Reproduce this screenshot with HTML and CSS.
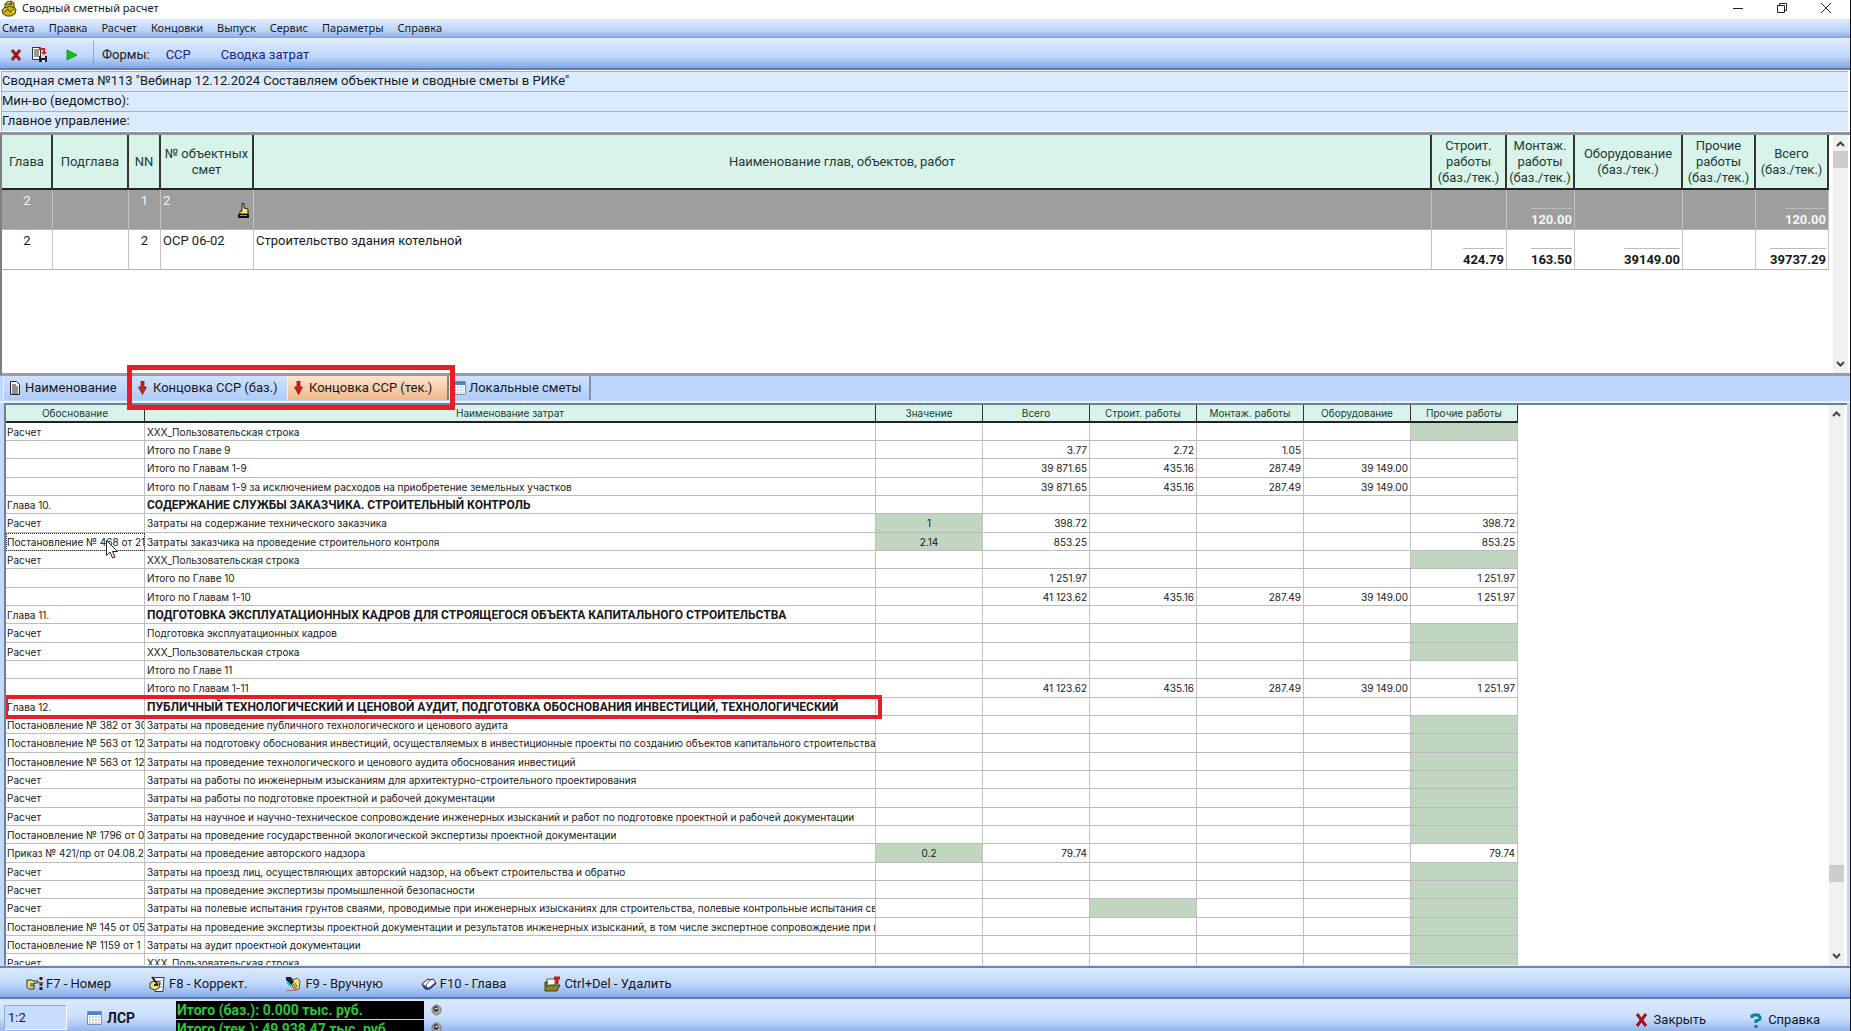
FILE: index.html
```html
<!DOCTYPE html>
<html lang="ru">
<head>
<meta charset="utf-8">
<title>Сводный сметный расчет</title>
<link rel="stylesheet" href="styles.css">
</head>
<body>
<header class="titlebar">
  <svg class="app-icon" width="17" height="17" viewBox="0 0 17 17"><path d="M4 4Q5 1 10 1l3 2v4l2 2-1 5-4 2H6l-4-2-1-4 3-3z" fill="#c9b117" stroke="#4a4107"/><path d="M5 4h6M4 8l5-2 4 2M3 12l4-3 2 3 4-3M10 2v3" stroke="#4a4107" fill="none"/><path d="M6 3l3-1M5 9l-2 1M11 11l2 1" stroke="#fff27a"/></svg>
  <h1>Сводный сметный расчет</h1>
  <div class="window-buttons">
    <button aria-label="Свернуть"><svg width="12" height="12"><path d="M1 6.5h10" stroke="#222"/></svg></button>
    <button aria-label="Развернуть"><svg width="12" height="12"><path d="M1.500 3.500h7v7h-7zM3.500 3V1.500h7v7H9" fill="none" stroke="#222"/></svg></button>
    <button aria-label="Закрыть окно"><svg width="12" height="12"><path d="M1 1l10 10M11 1L1 11" stroke="#222"/></svg></button>
  </div>
</header>
<nav class="menu">
  <button>Смета</button><button>Правка</button><button>Расчет</button><button>Концовки</button><button>Выпуск</button><button>Сервис</button><button>Параметры</button><button>Справка</button>
</nav>
<div class="toolbar">
  <div class="tools">
    <button aria-label="Удалить"><svg width="12" height="12"><path d="M2 1l8 10M10 1L2 11" stroke="#a01414" stroke-width="3"/></svg></button>
    <button aria-label="Сохранить"><svg width="17" height="17"><path d="M1.500 1.500h8v12h-8z" fill="#fff" stroke="#333"/><path d="M3 4h5M3 6h5M3 8h5M3 10h5" stroke="#333"/><path d="M8 3h5v4" fill="none" stroke="#e02020" stroke-width="2"/><path d="M10 6h6l-3 3z" fill="#e02020"/><path d="M8 10h8v6H8z" fill="#16202e"/><path d="M10 10h4v2h-4zM11 14h3v2h-3z" fill="#dde"/></svg></button>
    <button aria-label="Запустить"><svg width="12" height="12"><path d="M1 1l10 5-10 5z" fill="#11c01d" stroke="#0d9a17"/></svg></button>
  </div>
  <span class="forms">Формы:</span>
  <button class="form">ССР</button>
  <button class="form">Сводка затрат</button>
</div>
<section class="info">
  <p>Сводная смета №113 "Вебинар 12.12.2024 Составляем объектные и сводные сметы в РИКе"</p>
  <p>Мин-во (ведомство):</p>
  <p>Главное управление:</p>
</section>
<section class="objects">
  <div class="objects-body">
  <table>
    <colgroup><col class="w-chapter"><col class="w-sub"><col class="w-nn"><col class="w-object"><col><col class="w-build"><col class="w-mount"><col class="w-equip"><col class="w-other"><col class="w-total"></colgroup>
    <thead><tr><th>Глава<th>Подглава<th>NN<th>№ объектных смет<th>Наименование глав, объектов, работ<th>Строит. работы (баз./тек.)<th>Монтаж. работы (баз./тек.)<th>Оборудование (баз./тек.)<th>Прочие работы (баз./тек.)<th>Всего (баз./тек.)</tr></thead>
    <tbody>
      <tr class="selected"><td class="mid">2<td><td class="mid">1<td><div class="object-cell">2<svg width="11" height="17" viewBox="0 0 11 17"><path d="M4 9V1.500h2V6l4 1v5H2V9z" fill="#f6ea6a" stroke="#222"/><path d="M0 12h11v4H0z" fill="#111"/><path d="M2 13.500h7" stroke="#2c8"/></svg></div><td><td><td class="sum"><b>120.00</b><td><td><td class="sum"><b>120.00</b></tr>
      <tr><td class="mid">2<td><td class="mid">2<td>ОСР 06-02<td>Строительство здания котельной<td class="sum"><b>424.79</b><td class="sum"><b>163.50</b><td class="sum"><b>39149.00</b><td><td class="sum"><b>39737.29</b></tr>
    </tbody>
  </table>
  </div>
  <div class="scroll">
    <svg width="9" height="6"><path d="M1 5l3.500-3.500L8 5" fill="none" stroke="#444" stroke-width="2"/></svg>
    <i class="thumb"></i><i class="rest"></i>
    <svg width="9" height="6"><path d="M1 1l3.500 3.500L8 1" fill="none" stroke="#444" stroke-width="2"/></svg>
  </div>
</section>
<div class="tabs" role="tablist">
  <button role="tab" class="tab name"><svg width="10" height="14"><path d="M.5.5h6l3 3v10h-9z" fill="#fff" stroke="#222"/><path d="M2 4h4M2 6h6M2 8h6M2 10h6M2 12h6" stroke="#222"/></svg>Наименование</button>
  <button role="tab" class="tab base"><svg width="9" height="14"><path d="M3 0h3v6h2.500L4.500 13.500.5 6H3z" fill="#e01c10" stroke="#6b1408" stroke-width=".7"/></svg>Концовка ССР (баз.)</button>
  <button role="tab" class="tab current" aria-selected="true"><svg width="9" height="14"><path d="M3 0h3v6h2.500L4.500 13.500.5 6H3z" fill="#e01c10" stroke="#6b1408" stroke-width=".7"/></svg>Концовка ССР (тек.)</button>
  <button role="tab" class="tab local"><svg width="14" height="14"><path d="M.5.500h13v13H.5z" fill="#fff" stroke="#7a8fb0"/><path d="M1 1h12v3H1z" fill="#4d84c8"/><path d="M2 6h10M2 9h10M2 12h10" stroke="#9ab" stroke-dasharray="2 1"/></svg>Локальные сметы</button>
  <span class="highlight"></span>
</div>
<section class="costs">
  <div class="costs-body">
  <table>
    <colgroup><col class="w-basis"><col class="w-cost"><col span="6" class="w-value"></colgroup>
    <thead><tr><th>Обоснование<th>Наименование затрат<th>Значение<th>Всего<th>Строит. работы<th>Монтаж. работы<th>Оборудование<th>Прочие работы</tr></thead>
    <tbody>
      <tr><td>Расчет<td>XXX_Пользовательская строка<td><td><td><td><td><td class="edit"></tr>
      <tr><td><td>Итого по Главе 9<td><td>3.77<td>2.72<td>1.05<td><td></tr>
      <tr><td><td>Итого по Главам 1-9<td><td>39 871.65<td>435.16<td>287.49<td>39 149.00<td></tr>
      <tr><td><td>Итого по Главам 1-9 за исключением расходов на приобретение земельных участков<td><td>39 871.65<td>435.16<td>287.49<td>39 149.00<td></tr>
      <tr><td>Глава 10.<td><b>СОДЕРЖАНИЕ СЛУЖБЫ ЗАКАЗЧИКА. СТРОИТЕЛЬНЫЙ КОНТРОЛЬ</b><td><td><td><td><td><td></tr>
      <tr><td>Расчет<td>Затраты на содержание технического заказчика<td class="edit">1<td>398.72<td><td><td><td>398.72</tr>
      <tr><td class="focus">Постановление № 468 от 21<svg class="cursor" width="12" height="19"><path d="M.5.5v15l3.500-3.500 2.500 6 2.500-1-2.500-5.500h5z" fill="#fff" stroke="#222"/></svg><td>Затраты заказчика на проведение строительного контроля<td class="edit">2.14<td>853.25<td><td><td><td>853.25</tr>
      <tr><td>Расчет<td>XXX_Пользовательская строка<td><td><td><td><td><td class="edit"></tr>
      <tr><td><td>Итого по Главе 10<td><td>1 251.97<td><td><td><td>1 251.97</tr>
      <tr><td><td>Итого по Главам 1-10<td><td>41 123.62<td>435.16<td>287.49<td>39 149.00<td>1 251.97</tr>
      <tr><td>Глава 11.<td><b>ПОДГОТОВКА ЭКСПЛУАТАЦИОННЫХ КАДРОВ ДЛЯ СТРОЯЩЕГОСЯ ОБЪЕКТА КАПИТАЛЬНОГО СТРОИТЕЛЬСТВА</b><td><td><td><td><td><td></tr>
      <tr><td>Расчет<td>Подготовка эксплуатационных кадров<td><td><td><td><td><td class="edit"></tr>
      <tr><td>Расчет<td>XXX_Пользовательская строка<td><td><td><td><td><td class="edit"></tr>
      <tr><td><td>Итого по Главе 11<td><td><td><td><td><td></tr>
      <tr><td><td>Итого по Главам 1-11<td><td>41 123.62<td>435.16<td>287.49<td>39 149.00<td>1 251.97</tr>
      <tr><td class="marked">Глава 12.<span class="row-highlight"></span><td><b>ПУБЛИЧНЫЙ ТЕХНОЛОГИЧЕСКИЙ И ЦЕНОВОЙ АУДИТ, ПОДГОТОВКА ОБОСНОВАНИЯ ИНВЕСТИЦИЙ, ТЕХНОЛОГИЧЕСКИЙ</b><td><td><td><td><td><td></tr>
      <tr><td>Постановление № 382 от 30<td>Затраты на проведение публичного технологического и ценового аудита<td><td><td><td><td><td class="edit"></tr>
      <tr><td>Постановление № 563 от 12<td>Затраты на подготовку обоснования инвестиций, осуществляемых в инвестиционные проекты по созданию объектов капитального строительства<td><td><td><td><td><td class="edit"></tr>
      <tr><td>Постановление № 563 от 12<td>Затраты на проведение технологического и ценового аудита обоснования инвестиций<td><td><td><td><td><td class="edit"></tr>
      <tr><td>Расчет<td>Затраты на работы по инженерным изысканиям для архитектурно-строительного проектирования<td><td><td><td><td><td class="edit"></tr>
      <tr><td>Расчет<td>Затраты на работы по подготовке проектной и рабочей документации<td><td><td><td><td><td class="edit"></tr>
      <tr><td>Расчет<td>Затраты на научное и научно-техническое сопровождение инженерных изысканий и работ по подготовке проектной и рабочей документации<td><td><td><td><td><td class="edit"></tr>
      <tr><td>Постановление № 1796 от 0<td>Затраты на проведение государственной экологической экспертизы проектной документации<td><td><td><td><td><td class="edit"></tr>
      <tr><td>Приказ № 421/пр от 04.08.2<td>Затраты на проведение авторского надзора<td class="edit">0.2<td>79.74<td><td><td><td>79.74</tr>
      <tr><td>Расчет<td>Затраты на проезд лиц, осуществляющих авторский надзор, на объект строительства и обратно<td><td><td><td><td><td class="edit"></tr>
      <tr><td>Расчет<td>Затраты на проведение экспертизы промышленной безопасности<td><td><td><td><td><td class="edit"></tr>
      <tr><td>Расчет<td>Затраты на полевые испытания грунтов сваями, проводимые при инженерных изысканиях для строительства, полевые контрольные испытания св<td><td><td class="edit"><td><td><td class="edit"></tr>
      <tr><td>Постановление № 145 от 05<td>Затраты на проведение экспертизы проектной документации и результатов инженерных изысканий, в том числе экспертное сопровождение при п<td><td><td><td><td><td class="edit"></tr>
      <tr><td>Постановление № 1159 от 1<td>Затраты на аудит проектной документации<td><td><td><td><td><td class="edit"></tr>
      <tr><td>Расчет<td>XXX_Пользовательская строка<td><td><td><td><td><td class="edit"></tr>
    </tbody>
  </table>
  </div>
  <div class="scroll">
    <svg width="9" height="6"><path d="M1 5l3.500-3.500L8 5" fill="none" stroke="#444" stroke-width="2"/></svg>
    <i class="space"></i><i class="thumb"></i><i class="rest"></i>
    <svg width="9" height="6"><path d="M1 1l3.500 3.500L8 1" fill="none" stroke="#444" stroke-width="2"/></svg>
  </div>
</section>
<div class="actions">
  <button><svg width="17" height="16"><path d="M1 4h5l1 1h5v2H8v6H3L1 11z" fill="#f3e36b" stroke="#333"/><path d="M4 8h4M4 10h4" stroke="#333"/><path d="M15 1v14" stroke="#222" stroke-width="3" stroke-dasharray="3 2"/><path d="M15 6v4" stroke="#d22" stroke-width="3" stroke-dasharray="2 1"/></svg>F7 - Номер</button>
  <button><svg width="17" height="16"><path d="M5 1.500h10l-1 14H6z" fill="#fff" stroke="#333"/><path d="M9 5h4M9 8h4M9 11h4" stroke="#888"/><path d="M1 7l4-2 6 1-1 6-4 2-5-2z" fill="#f3e36b" stroke="#333"/><path d="M3 1l6 8M5 9h4" stroke="#222" stroke-width="2"/></svg>F8 - Коррект.</button>
  <button><svg width="17" height="16"><path d="M5 5l7-3 3 3-1 8H9z" fill="#f3e36b" stroke="#555"/><path d="M1 1h5l3 5-3 3-5-5z" fill="#123"/><path d="M2 6l4 5" stroke="#2bc4c9" stroke-width="2"/><path d="M8 8l3 4M10 7l2 4" stroke="#555"/><path d="M1 14.500h11" stroke="#c66"/></svg>F9 - Вручную</button>
  <button><svg width="16" height="16"><path d="M1 8l6-5 2 1 3-1 3 4-6 6-3-1-2 1z" fill="#fff" stroke="#222"/><path d="M2 9l4 4 3-1 6-5" fill="none" stroke="#2d3e93" stroke-width="2"/><path d="M9 4L5 9l1 3" fill="none" stroke="#555"/></svg>F10 - Глава</button>
  <button><svg width="17" height="16"><path d="M3 3h8v9H3z" fill="#fff" stroke="#555"/><path d="M10 2h6M13 2v6" stroke="#c01c1c" stroke-width="3"/><path d="M1 14V6h2v5l2-2h11l-3 6H1z" fill="#8b8424" stroke="#403c0c"/></svg>Ctrl+Del - Удалить</button>
</div>
<footer class="status">
  <div class="position">1:2</div>
  <button class="estimate"><svg width="15" height="14"><path d="M.5.500h14v13H.5z" fill="#fff" stroke="#7a8fb0"/><path d="M1 1h13v3H1z" fill="#4d84c8"/><path d="M2 6h11M2 9h11M2 12h11" stroke="#9ab" stroke-dasharray="2 1"/></svg>ЛСР</button>
  <div class="totals"><p>Итого (баз.): 0.000 тыс. руб.</p><p>Итого (тек.): 49 938.47 тыс. руб.</p></div>
  <div class="knobs">
    <svg width="11" height="12"><ellipse cx="5.500" cy="6" rx="4.500" ry="5" fill="#aaa" stroke="#777"/><ellipse cx="5" cy="5" rx="2.500" ry="3" fill="#444"/><path d="M4 5l3-1" stroke="#eee"/></svg>
    <svg width="11" height="12"><ellipse cx="5.500" cy="6" rx="4.500" ry="5" fill="#aaa" stroke="#777"/><ellipse cx="5" cy="5" rx="2.500" ry="3" fill="#444"/><path d="M4 5l3-1" stroke="#eee"/></svg>
  </div>
  <div class="status-buttons">
    <button><svg width="13" height="14"><path d="M2 1l9 12M11 1L2 13" stroke="#a01414" stroke-width="3"/></svg>Закрыть</button>
    <button><svg width="12" height="15"><path d="M2 5V3l2-1h4l2 2v2L6 8v2M6 12v3" fill="none" stroke="#0b7f9c" stroke-width="3"/></svg>Справка</button>
  </div>
</footer>
</body>
</html>
```
FILE: styles.css
```css
* { box-sizing: border-box; }
body {
  margin: 0;
  height: 100vh;
  display: flex;
  flex-direction: column;
  overflow: hidden;
  border-right: 1px solid #111;
  background: #c1d9fc;
  color: #16181c;
  font: 13px/16px Roboto, "Liberation Sans", sans-serif;
}
body > * { flex: none; }
button {
  margin: 0;
  padding: 0;
  border: 0;
  background: none;
  color: inherit;
  font: inherit;
  white-space: nowrap;
}
p { margin: 0; }
svg { flex: none; display: block; }

.titlebar {
  height: 19px;
  display: flex;
  align-items: center;
  gap: 4px;
  padding: 0 18px 3px 1px;
  background: #fff;
}
h1 { margin: 0; font: 11px/16px "Noto Sans", sans-serif; }
.window-buttons { margin-left: auto; display: flex; gap: 32px; }

.menu {
  height: 19px;
  display: flex;
  gap: 14px;
  padding: 0 0 1px 2px;
  border-bottom: 1px solid #7f9fd0;
  background: linear-gradient(#dceafd, #c0d7fb 60%, #8db1ee);
  font: 11px/16px "Noto Sans", sans-serif;
}
.toolbar {
  height: 32px;
  display: flex;
  align-items: center;
  padding-top: 2px;
  border-top: 1px solid #eef5ff;
  border-bottom: 2px solid #5f7fb4;
  background: linear-gradient(#dceafd, #c0d8fc 60%, #7fa6e8);
}
.tools {
  align-self: stretch;
  width: 94px;
  display: flex;
  align-items: center;
  padding-left: 10px;
  border-right: 1px solid #8daad6;
}
.tools button + button { margin-left: 9px; }
.tools button:last-child { margin-left: 18px; }
.forms { margin-left: 8px; }
.form { margin-left: 16px; color: #16218c; }
.form + .form { margin-left: 30px; }

.info { padding: 1px 2px 1px 1px; border-bottom: 3px solid #8f9499; background: #fff; }
.info p {
  height: 20px;
  border-top: 1px solid #a5b0bf;
  border-left: 1px solid #a5b0bf;
  background: #dceafd;
  line-height: 18px;
}

.objects { height: 241px; display: flex; border-left: 2px solid #7c8085; border-bottom: 3px solid #9a9da2; background: #fff; }
.objects-body { flex: 1; min-width: 0; }
table { border-collapse: separate; border-spacing: 0; table-layout: fixed; }
.objects table { width: 100%; }
.w-chapter { width: 51px; }
.w-sub { width: 76px; }
.w-nn { width: 32px; }
.w-object { width: 93px; }
.w-build { width: 75px; }
.w-mount { width: 68px; }
.w-equip { width: 108px; }
.w-other { width: 73px; }
.w-total { width: 73px; }
th { background: #d8f3ea; color: #263a36; font-weight: 400; }
.objects th {
  height: 55px;
  padding: 0;
  border-right: 2px solid #333;
  border-bottom: 2px solid #222;
  line-height: 16px;
}
.objects td {
  height: 40px;
  padding: 3px 2px 0;
  border-right: 1px solid #c4c4c4;
  border-bottom: 1px solid #b4b4b4;
  vertical-align: top;
}
.objects .mid { text-align: center; }
.objects .sum { padding: 0 2px 1px; text-align: right; vertical-align: bottom; }
.sum b { display: inline-block; border-top: 1px solid #bbb; padding-top: 3px; }
.selected td { background: #9e9e9e; color: #f4f4f4; }
.object-cell { display: flex; justify-content: space-between; padding-right: 2px; }
.object-cell svg { margin-top: 9px; }

.scroll {
  width: 15px;
  display: flex;
  flex-direction: column;
  align-items: center;
  padding: 6px 0;
  background: #f0f0f0;
}
.objects .scroll { margin: 0 2px 0 4px; }
.thumb { width: 15px; height: 17px; margin-top: 4px; background: #cdcdcd; }
.rest { flex: 1; }

.tabs {
  position: relative;
  height: 27px;
  display: flex;
  align-items: flex-start;
  padding-left: 3px;
  border-bottom: 2px solid #eaf2fe;
  background: #bdd7fd;
}
.tab {
  height: 24px;
  display: flex;
  align-items: center;
  gap: 5px;
  padding-left: 6px;
  border-left: 1px solid #eaf3ff;
  background: linear-gradient(#d0e2fd, #aecbf8);
}
.name { width: 128px; }
.base { width: 156px; gap: 6px; }
.current { width: 162px; gap: 6px; background: linear-gradient(#fde3cf, #f3b988); border-right: 2px solid #8a7f7a; }
.local { padding: 0 7px 0 2px; gap: 3px; border-right: 2px solid #7e90ac; }
.highlight {
  position: absolute;
  z-index: 2;
  left: 127px;
  top: -11px;
  width: 328px;
  height: 45px;
  border: 5px solid #e81d25;
}

.costs {
  flex: 1;
  min-height: 0;
  display: flex;
  margin: 0 3px 0 4px;
  padding-right: 3px;
  border-top: 2px solid #6f7f95;
  border-left: 2px solid #6f7f95;
  border-bottom: 1px solid #dfe9f8;
  background: #fff;
}
.costs-body { flex: 1; min-width: 0; overflow: hidden; }
.costs table { width: 1512px; font: 10px/15px Inter, "Liberation Sans", sans-serif; }
.w-basis { width: 139px; }
.w-cost { width: 731px; }
.w-value { width: 107px; }
.costs th {
  height: 18px;
  padding: 0;
  border-right: 1px solid #333;
  border-bottom: 2px solid #222;
}
.costs td {
  height: 18px;
  padding: 1px 2px 0;
  overflow: hidden;
  border-right: 1px solid #c0c0c0;
  border-bottom: 1px solid #bcbcbc;
  text-align: right;
  white-space: nowrap;
}
.costs tr:nth-child(3n) td { height: 19px; }
.costs td:nth-child(-n+2) { padding-right: 0; text-align: left; }
.costs td:first-child { padding-left: 1px; }
.costs td:nth-child(3) { text-align: center; }
.costs b { font: 700 12px/15px Roboto, "Liberation Sans", sans-serif; }
.costs .edit { background: #c1d6c0; }
.costs .focus { position: relative; overflow-x: clip; overflow-y: visible; outline: 1px dotted #333; outline-offset: -1px; }
.cursor { position: absolute; z-index: 1; left: 100px; top: 7px; }
.costs .marked { position: relative; overflow: visible; }
.row-highlight {
  position: absolute;
  z-index: 2;
  left: -2px;
  top: -3px;
  width: 878px;
  height: 24px;
  border: 4px solid #e81d25;
}
.space { flex: 44; }
.costs .scroll .rest { flex: 7; }

.actions {
  height: 33px;
  display: flex;
  align-items: center;
  gap: 38px;
  padding: 2px 0 0 26px;
  border-top: 2px solid #6c85ae;
  border-bottom: 2px solid #5c80bd;
  background: linear-gradient(#dceafd, #c0d8fc 55%, #86abea);
}
.actions button { display: flex; align-items: center; gap: 3px; }

.status {
  height: 32px;
  display: flex;
  align-items: flex-start;
  background: linear-gradient(#dceafd, #c8ddfc 60%, #93b5ee);
}
.position {
  width: 63px;
  height: 25px;
  margin: 6px 0 0 4px;
  padding-left: 3px;
  border: 1px solid #93abd0;
  border-color: #93abd0 #fff #fff #93abd0;
  background: #c6dcfd;
  line-height: 24px;
}
.estimate { width: 89px; display: flex; align-items: center; gap: 5px; margin: 11px 0 0 20px; font-size: 14px; font-weight: 700; }
.totals { width: 248px; height: 38px; margin-top: 2px; color: #2fc43a; font-weight: 700; font-size: 14px; }
.totals p { height: 18px; margin-bottom: 1px; padding-left: 1px; background: #000; line-height: 18px; }
.knobs { display: grid; gap: 6px; margin: 5px 0 0 7px; }
.status-buttons { margin: 13px 30px 0 auto; display: flex; gap: 44px; }
.status-buttons button { display: flex; align-items: center; gap: 6px; }
```
